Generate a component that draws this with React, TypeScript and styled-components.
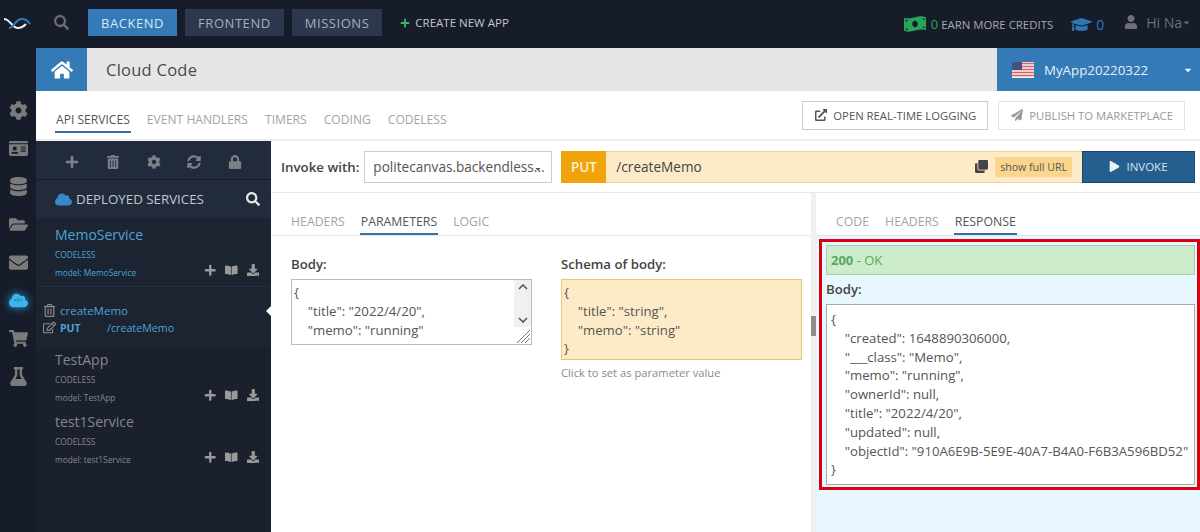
import styled, { createGlobalStyle } from "styled-components";
import {
  FaBookOpen,
  FaCaretDown,
  FaClone,
  FaCloud,
  FaCog,
  FaDatabase,
  FaDownload,
  FaEnvelope,
  FaExternalLinkAlt,
  FaFlask,
  FaFolderOpen,
  FaGraduationCap,
  FaHome,
  FaIdCard,
  FaLock,
  FaMoneyBillWave,
  FaPaperPlane,
  FaPlay,
  FaPlus,
  FaRegEdit,
  FaRegTrashAlt,
  FaSearch,
  FaShoppingCart,
  FaSyncAlt,
  FaTrashAlt,
  FaUser,
} from "react-icons/fa";

const GlobalStyle = createGlobalStyle`
  html, body {
    margin: 0;
    padding: 0;
    height: 100%;
    overflow: hidden;
  }
  body {
    font-family: "Open Sans", "Liberation Sans", sans-serif;
    background: #fff;
    color: #444;
  }
  * { box-sizing: border-box; }
`;

const Page = styled.div`
  width: 1200px;
  height: 532px;
  display: flex;
  flex-direction: column;
  overflow: hidden;
  background: #171d2b;
`;

const TopBar = styled.div`
  height: 48px;
  flex: none;
  display: flex;
  align-items: center;
  padding-bottom: 3px;
  background: #161c2a;
`;
const Logo = styled.svg`
  width: 28px;
  height: 14px;
  margin: 0 0 0 3px;
  flex: none;
`;
const TopSearch = styled(FaSearch)`
  color: #6a6a6a;
  font-size: 15px;
  margin: 0 19px 0 23px;
  flex: none;
`;
const NavButton = styled.div<{ $active?: boolean }>`
  height: 27px;
  display: flex;
  align-items: center;
  justify-content: center;
  padding: 0 13px;
  margin-right: 8px;
  font-size: 13px;
  letter-spacing: 0.55px;
  background: ${(p) => (p.$active ? "#337ab7" : "#2d3850")};
  color: ${(p) => (p.$active ? "#d6e8f6" : "#a9adb5")};
`;
const CreateApp = styled.div`
  display: flex;
  align-items: center;
  margin-left: 10px;
  gap: 5px;
  font-size: 11.5px;
  color: #c4c6ca;
  svg { color: #3fb56a; font-size: 10px; }
`;
const TopRight = styled.div`
  margin-left: auto;
  margin-top: 3px;
  display: flex;
  align-items: center;
  font-size: 11.4px;
  color: #a6a9b0;
`;
const Credits = styled.span`
  display: flex;
  align-items: center;
  margin-right: 18px;
  svg { color: #27a55a; font-size: 22px; margin-right: 5px; }
  b { font-weight: 400; color: #2aa35a; font-size: 13px; margin-right: 3px; }
`;
const Learn = styled.span`
  display: flex;
  align-items: center;
  gap: 4px;
  margin-right: 20px;
  color: #2f78b5;
  font-size: 14px;
  svg { font-size: 21px; }
`;
const UserMenu = styled.span`
  display: flex;
  align-items: center;
  color: #6d7077;
  font-size: 14px;
  margin-right: 9px;
  margin-top: -4px;
  svg:first-child { font-size: 14px; margin-right: 8px; }
  svg:last-child { font-size: 9px; }
`;

const Body = styled.div`
  flex: 1;
  min-height: 0;
  display: flex;
`;
const Rail = styled.div`
  width: 36px;
  flex: none;
  display: flex;
  flex-direction: column;
  align-items: center;
  padding-top: 43px;
  background: #161c2a;
  color: #7b7b7b;
`;
const RailItem = styled.div<{ $active?: boolean }>`
  height: 38px;
  position: relative;
  display: flex;
  align-items: center;
  justify-content: center;
  font-size: 19px;
  color: ${(p) => (p.$active ? "#3db4ee" : "#7b7b7b")};
  filter: ${(p) => (p.$active ? "drop-shadow(0 0 4px #2a9fdc)" : "none")};
`;
const CloudCode = styled.span`
  position: absolute;
  left: 0;
  right: 0;
  top: 15px;
  text-align: center;
  font-size: 6px;
  line-height: 8px;
  color: #15415f;
`;
const Content = styled.div`
  flex: 1;
  min-width: 0;
  display: flex;
  flex-direction: column;
  background: #fff;
`;
const Header = styled.div`
  height: 43px;
  flex: none;
  display: flex;
  background: #e6e6e6;
`;
const HomeButton = styled.div`
  width: 51px;
  display: flex;
  align-items: center;
  justify-content: center;
  background: #337ab7;
  color: #fff;
  font-size: 22px;
`;
const PageTitle = styled.div`
  flex: 1;
  display: flex;
  align-items: center;
  padding-left: 19px;
  font-size: 16.5px;
  letter-spacing: 0.25px;
  color: #4a4a4a;
`;
const AppSelect = styled.div`
  width: 203px;
  display: flex;
  align-items: center;
  padding: 0 7px 0 15px;
  background: #337ab7;
  color: #e8f1f8;
  font-size: 13.3px;
  svg:last-child { margin-left: auto; font-size: 10px; }
`;
const Flag = styled.svg`
  width: 22px;
  height: 16px;
  margin-right: 10px;
`;
const TabsRow = styled.div`
  height: 50px;
  flex: none;
  display: flex;
  align-items: center;
  justify-content: space-between;
  padding: 0 15px 0 19px;
  border-bottom: 2px solid #eee;
`;
const Tabs = styled.div<{ $gap: number }>`
  display: flex;
  align-items: flex-end;
  gap: ${(p) => p.$gap}px;
`;
const Tab = styled.div<{ $active?: boolean }>`
  padding: 0 1px 3px;
  font-size: 12.3px;
  line-height: 17px;
  color: ${(p) => (p.$active ? "#555" : "#a3a3a3")};
  border-bottom: 2px solid ${(p) => (p.$active ? "#336f9f" : "transparent")};
`;
const MainTabs = styled(Tabs)`
  margin-top: 14px;
  ${Tab} { font-size: 12.1px; }
`;
const Actions = styled.div`
  display: flex;
  gap: 10px;
`;
const ActionButton = styled.div<{ $muted?: boolean }>`
  height: 29px;
  display: flex;
  align-items: center;
  gap: 6px;
  padding: 0 11px 0 12px;
  font-size: 11.3px;
  color: ${(p) => (p.$muted ? "#9a9a9a" : "#555")};
  border: 1px solid ${(p) => (p.$muted ? "#e2e2e2" : "#ccc")};
  svg { font-size: 12px; }
`;
const Workspace = styled.div`
  flex: 1;
  min-height: 0;
  display: flex;
`;

const Sidebar = styled.div`
  width: 235px;
  flex: none;
  background: #1a202c;
  display: flex;
  flex-direction: column;
`;
const SideTools = styled.div`
  height: 39px;
  flex: none;
  display: flex;
  align-items: center;
  padding: 3px 29px 0 29px;
  justify-content: space-between;
  background: #222b3b;
  color: #7c7f85;
  font-size: 14px;
  border-bottom: 1px solid #171c27;
`;
const DeployedRow = styled.div`
  height: 38px;
  flex: none;
  display: flex;
  align-items: center;
  padding: 0 11px 0 19px;
  background: #222b3b;
  color: #c3c6cb;
  font-size: 13.3px;
  > svg:first-child { color: #3a86c8; font-size: 17px; margin-right: 4px; }
  > svg:last-child { color: #e6e6e6; font-size: 14px; margin-left: auto; }
`;
const ServiceBlock = styled.div<{ $active?: boolean }>`
  height: ${(p) => (p.$active ? "69px" : "62px")};
  flex: none;
  position: relative;
  padding: ${(p) => (p.$active ? "7px" : "3px")} 12px 0 19px;
  color: ${(p) => (p.$active ? "#4ea3d6" : "#85878c")};
  background: ${(p) => (p.$active ? "#1c2331" : "transparent")};
  border-bottom: ${(p) => (p.$active ? "1px solid #262f3f" : "none")};
`;
const ServiceName = styled.div`
  font-size: 14px;
  line-height: 20px;
`;
const ServiceKind = styled.div`
  font-size: 8.3px;
  line-height: 10px;
  margin-top: 5px;
`;
const ServiceFoot = styled.div`
  display: flex;
  align-items: center;
  justify-content: space-between;
  font-size: 8.3px;
  margin-top: 6px;
  line-height: 14px;
`;
const ServiceIcons = styled.span`
  display: flex;
  align-items: center;
  gap: 9px;
  margin-top: -6px;
  color: #9a9a9a;
  font-size: 12.5px;
`;
const MethodBlock = styled.div`
  height: 60px;
  flex: none;
  position: relative;
  padding: 15px 0 0 7px;
  background: #1c2331;
  color: #4ea3d6;
  font-size: 11.5px;
`;
const MethodRow = styled.div`
  display: flex;
  align-items: center;
  height: 17px;
  svg { color: #8a8a8a; font-size: 13px; width: 13px; margin-right: 4px; }
`;
const MethodVerb = styled.b`
  font-size: 10.5px;
  font-weight: 700;
  width: 47px;
`;
const MethodPath = styled.span`
  font-size: 10.7px;
`;
const Pointer = styled.span`
  position: absolute;
  right: 0;
  top: 19px;
  width: 0;
  height: 0;
  border-style: solid;
  border-width: 5px 5px 5px 0;
  border-color: transparent #fff transparent transparent;
`;

const MainArea = styled.div`
  flex: 1;
  min-width: 0;
  display: flex;
  flex-direction: column;
`;
const InvokeRow = styled.div`
  height: 52px;
  flex: none;
  display: flex;
  align-items: center;
  padding: 0 5px 0 10px;
  border-bottom: 1px solid #e6e6e6;
`;
const InvokeLabel = styled.span`
  font-size: 13.3px;
  font-weight: 600;
  color: #444;
  margin-right: 5px;
`;
const HostSelect = styled.div`
  width: 188px;
  height: 32px;
  display: flex;
  align-items: center;
  position: relative;
  padding-left: 8px;
  margin-right: 9px;
  font-size: 13.6px;
  color: #555;
  white-space: nowrap;
  border: 1px solid #ccc;
`;
const SelectCaret = styled(FaCaretDown)`
  position: absolute;
  right: 9px;
  top: 13px;
  font-size: 8px;
  color: #555;
`;
const UrlBar = styled.div`
  flex: 1;
  height: 32px;
  display: flex;
  align-items: center;
  background: #fdebc8;
  border-top: 1px solid #e8d296;
  border-bottom: 1px solid #e8d296;
`;
const Verb = styled.div`
  width: 45px;
  align-self: stretch;
  margin: -1px 0;
  display: flex;
  align-items: center;
  justify-content: center;
  background: #f0a30a;
  color: #fdf0d5;
  font-size: 13.5px;
  font-weight: 600;
`;
const UrlPath = styled.span`
  margin-left: 10px;
  font-size: 13.6px;
  color: #444;
`;
const CopyIcon = styled(FaClone)`
  margin-left: auto;
  margin-right: 7px;
  font-size: 13px;
  color: #444;
`;
const FullUrl = styled.span`
  height: 20px;
  display: flex;
  align-items: center;
  padding: 0 5px;
  margin-right: 10px;
  font-size: 10.6px;
  color: #555;
  background: #fbd58e;
`;
const InvokeButton = styled.div`
  width: 113px;
  align-self: stretch;
  margin: -1px 0;
  display: flex;
  align-items: center;
  justify-content: center;
  gap: 6px;
  font-size: 11.5px;
  color: #d5e3ee;
  background: #265f8f;
  border: 1px solid #1d4666;
  svg { font-size: 11px; color: #eaf2f8; }
`;
const Panes = styled.div`
  flex: 1;
  min-height: 0;
  display: flex;
`;
const LeftPane = styled.div`
  width: 540px;
  flex: none;
  display: flex;
  flex-direction: column;
`;
const Splitter = styled.div`
  width: 5px;
  flex: none;
  background: #f0f0f0;
  display: flex;
  align-items: center;
  padding-bottom: 74px;
`;
const Grip = styled.span`
  display: block;
  width: 5px;
  height: 20px;
  background: #8d8d8d;
`;
const RightPane = styled.div`
  flex: 1;
  min-width: 0;
  display: flex;
  flex-direction: column;
  background: #e8f6fe;
`;
const PaneTabs = styled.div<{ $inset: number }>`
  height: 43px;
  flex: none;
  display: flex;
  align-items: flex-end;
  padding-left: ${(p) => p.$inset}px;
  background: #fff;
  border-bottom: 1px solid #e6e6e6;
`;
const PaneColumns = styled.div`
  display: flex;
  padding: 20px 9px 0 20px;
  gap: 29px;
`;
const Column = styled.div`
  display: flex;
  flex-direction: column;
`;
const FieldLabel = styled.div`
  font-size: 13.2px;
  font-weight: 600;
  line-height: 17px;
  color: #444;
  margin-bottom: 6px;
`;
const CodeText = styled.pre`
  margin: 0;
  font-family: inherit;
  font-size: 13.2px;
  line-height: 18.8px;
  color: #555;
  white-space: pre;
`;
const BodyInput = styled.div`
  width: 241px;
  height: 66px;
  position: relative;
  overflow: hidden;
  padding: 3px 0 0 2px;
  border: 1px solid #bbb;
  background: #fff;
`;
const ScrollTrack = styled.div`
  position: absolute;
  top: 0;
  right: 0;
  width: 17px;
  height: 47px;
  display: flex;
  flex-direction: column;
  justify-content: space-between;
  align-items: center;
  padding: 4px 0;
  background: #f0f0f0;
  svg { display: block; }
`;
const ResizeHandle = styled.svg`
  position: absolute;
  right: 1px;
  bottom: 1px;
  width: 14px;
  height: 14px;
`;
const SchemaBox = styled.div`
  width: 241px;
  height: 81px;
  padding: 3px 0 0 2px;
  background: #fdebc8;
  border: 1px solid #e6c87c;
`;
const Hint = styled.div`
  font-size: 11.2px;
  color: #8a8a8a;
  margin-top: 5px;
`;
const ResponseFrame = styled.div`
  margin: 3px 0 0 3px;
  height: 251px;
  flex: none;
  border: 3px solid #d8000f;
  padding: 3px 2px 0 4px;
`;
const StatusBar = styled.div`
  height: 30px;
  display: flex;
  align-items: center;
  padding-left: 4px;
  font-size: 13px;
  color: #5aa75f;
  background: #cdeccb;
  border: 1px solid #a7cfa4;
  b { font-weight: 700; }
`;
const ResponseLabel = styled(FieldLabel)`
  margin: 6px 0 6px;
`;
const ResponseBody = styled.div`
  height: 181px;
  padding: 5px 0 0 4px;
  background: #fff;
  border: 1px solid #a9a9a9;
  overflow: hidden;
`;

const services = [
  { name: "TestApp", model: "TestApp" },
  { name: "test1Service", model: "test1Service" },
];

const responseText = `{
    "created": 1648890306000,
    "___class": "Memo",
    "memo": "running",
    "ownerId": null,
    "title": "2022/4/20",
    "updated": null,
    "objectId": "910A6E9B-5E9E-40A7-B4A0-F6B3A596BD52"
}`;

function ServiceActions() {
  return (
    <ServiceIcons>
      <FaPlus />
      <FaBookOpen />
      <FaDownload />
    </ServiceIcons>
  );
}

function App() {
  return (
    <Page>
      <GlobalStyle />
      <TopBar>
        <Logo viewBox="0 0 28 14" fill="none">
          <path d="M1 3c6 0 8 9 14 9 4 0 6-2 8-4" stroke="#e9eef3" strokeWidth="2" />
          <path d="M6 12c5 0 6-9 13-9 3 0 6 2 8 5" stroke="#3478b8" strokeWidth="2" />
        </Logo>
        <TopSearch />
        <NavButton $active>BACKEND</NavButton>
        <NavButton>FRONTEND</NavButton>
        <NavButton>MISSIONS</NavButton>
        <CreateApp>
          <FaPlus />
          CREATE NEW APP
        </CreateApp>
        <TopRight>
          <Credits>
            <FaMoneyBillWave />
            <b>0</b>
            EARN MORE CREDITS
          </Credits>
          <Learn>
            <FaGraduationCap />0
          </Learn>
          <UserMenu>
            <FaUser />
            Hi Na
            <FaCaretDown />
          </UserMenu>
        </TopRight>
      </TopBar>
      <Body>
        <Rail>
          <RailItem><FaCog /></RailItem>
          <RailItem><FaIdCard /></RailItem>
          <RailItem><FaDatabase /></RailItem>
          <RailItem><FaFolderOpen /></RailItem>
          <RailItem><FaEnvelope /></RailItem>
          <RailItem $active>
            <FaCloud />
            <CloudCode>&lt;/&gt;</CloudCode>
          </RailItem>
          <RailItem><FaShoppingCart /></RailItem>
          <RailItem><FaFlask /></RailItem>
        </Rail>
        <Content>
          <Header>
            <HomeButton><FaHome /></HomeButton>
            <PageTitle>Cloud Code</PageTitle>
            <AppSelect>
              <Flag viewBox="0 0 22 16">
                <rect width="22" height="16" fill="#f3f3f3" />
                <path d="M0 1.5h22M0 4.5h22M0 7.5h22M0 10.5h22M0 13.5h22" stroke="#d8626b" strokeWidth="1.5" />
                <rect width="10" height="8" fill="#49507e" />
              </Flag>
              MyApp20220322
              <FaCaretDown />
            </AppSelect>
          </Header>
          <TabsRow>
            <MainTabs $gap={15}>
              <Tab $active>API SERVICES</Tab>
              <Tab>EVENT HANDLERS</Tab>
              <Tab>TIMERS</Tab>
              <Tab>CODING</Tab>
              <Tab>CODELESS</Tab>
            </MainTabs>
            <Actions>
              <ActionButton>
                <FaExternalLinkAlt />
                OPEN REAL-TIME LOGGING
              </ActionButton>
              <ActionButton $muted>
                <FaPaperPlane />
                PUBLISH TO MARKETPLACE
              </ActionButton>
            </Actions>
          </TabsRow>
          <Workspace>
            <Sidebar>
              <SideTools>
                <FaPlus />
                <FaTrashAlt />
                <FaCog />
                <FaSyncAlt />
                <FaLock />
              </SideTools>
              <DeployedRow>
                <FaCloud />
                DEPLOYED SERVICES
                <FaSearch />
              </DeployedRow>
              <ServiceBlock $active>
                <ServiceName>MemoService</ServiceName>
                <ServiceKind>CODELESS</ServiceKind>
                <ServiceFoot>
                  model: MemoService
                  <ServiceActions />
                </ServiceFoot>
              </ServiceBlock>
              <MethodBlock>
                <MethodRow>
                  <FaRegTrashAlt />
                  <span>createMemo</span>
                </MethodRow>
                <MethodRow>
                  <FaRegEdit />
                  <MethodVerb>PUT</MethodVerb>
                  <MethodPath>/createMemo</MethodPath>
                </MethodRow>
                <Pointer />
              </MethodBlock>
              {services.map((s) => (
                <ServiceBlock key={s.name}>
                  <ServiceName>{s.name}</ServiceName>
                  <ServiceKind>CODELESS</ServiceKind>
                  <ServiceFoot>
                    model: {s.model}
                    <ServiceActions />
                  </ServiceFoot>
                </ServiceBlock>
              ))}
            </Sidebar>
            <MainArea>
              <InvokeRow>
                <InvokeLabel>Invoke with:</InvokeLabel>
                <HostSelect>
                  politecanvas.backendless...
                  <SelectCaret />
                </HostSelect>
                <UrlBar>
                  <Verb>PUT</Verb>
                  <UrlPath>/createMemo</UrlPath>
                  <CopyIcon />
                  <FullUrl>show full URL</FullUrl>
                  <InvokeButton>
                    <FaPlay />
                    INVOKE
                  </InvokeButton>
                </UrlBar>
              </InvokeRow>
              <Panes>
                <LeftPane>
                  <PaneTabs $inset={19}>
                    <Tabs $gap={14}>
                      <Tab>HEADERS</Tab>
                      <Tab $active>PARAMETERS</Tab>
                      <Tab>LOGIC</Tab>
                    </Tabs>
                  </PaneTabs>
                  <PaneColumns>
                    <Column>
                      <FieldLabel>Body:</FieldLabel>
                      <BodyInput>
                        <CodeText>{`{
    "title": "2022/4/20",
    "memo": "running"
}`}</CodeText>
                        <ScrollTrack>
                          <svg width="10" height="6" viewBox="0 0 10 6" fill="none">
                            <path d="M1 5l4-4 4 4" stroke="#555" strokeWidth="1.6" />
                          </svg>
                          <svg width="10" height="6" viewBox="0 0 10 6" fill="none">
                            <path d="M1 1l4 4 4-4" stroke="#555" strokeWidth="1.6" />
                          </svg>
                        </ScrollTrack>
                        <ResizeHandle viewBox="0 0 14 14" fill="none">
                          <path d="M1 14L14 1M5 14l9-9M9 14l5-5" stroke="#777" />
                        </ResizeHandle>
                      </BodyInput>
                    </Column>
                    <Column>
                      <FieldLabel>Schema of body:</FieldLabel>
                      <SchemaBox>
                        <CodeText>{`{
    "title": "string",
    "memo": "string"
}`}</CodeText>
                      </SchemaBox>
                      <Hint>Click to set as parameter value</Hint>
                    </Column>
                  </PaneColumns>
                </LeftPane>
                <Splitter>
                  <Grip />
                </Splitter>
                <RightPane>
                  <PaneTabs $inset={19}>
                    <Tabs $gap={14}>
                      <Tab>CODE</Tab>
                      <Tab>HEADERS</Tab>
                      <Tab $active>RESPONSE</Tab>
                    </Tabs>
                  </PaneTabs>
                  <ResponseFrame>
                    <StatusBar>
                      <b>200</b>&nbsp;- OK
                    </StatusBar>
                    <ResponseLabel>Body:</ResponseLabel>
                    <ResponseBody>
                      <CodeText>{responseText}</CodeText>
                    </ResponseBody>
                  </ResponseFrame>
                </RightPane>
              </Panes>
            </MainArea>
          </Workspace>
        </Content>
      </Body>
    </Page>
  );
}

export default App;
